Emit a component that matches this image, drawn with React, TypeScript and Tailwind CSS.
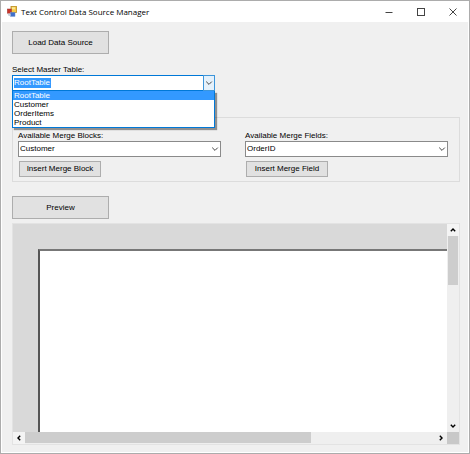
import React, { useState } from 'react'

const TABLES = ['RootTable', 'Customer', 'OrderItems', 'Product']
const BLOCKS = ['Customer', 'OrderItems', 'Product']
const FIELDS = ['OrderID', 'OrderDate', 'ShipName']

const BUTTON = 'border border-[#adadad] bg-[#e1e1e1] text-center hover:border-[#0078d7] hover:bg-[#e5f1fb]'

type ArrowProps = { d: string; className?: string; weight?: number }

const Arrow: React.FC<ArrowProps> = ({ d, className, weight = 1 }) => (
  <svg viewBox="0 0 8 8" className={`h-2 w-2 ${className ?? ''}`} fill="none" stroke="currentColor" strokeWidth={weight}>
    <path d={d} />
  </svg>
)

const DOWN = 'M1.2 2.6L4 5.4L6.8 2.6'

const AppIcon: React.FC = () => (
  <svg viewBox="0 0 10 11" className="h-[11px] w-[10px]">
    <rect x="4" y="0.5" width="5.5" height="6" fill="#f6c945" stroke="#b98a1c" strokeWidth="0.8" />
    <rect x="5" y="1.3" width="3" height="2" fill="#fde89a" />
    <rect x="0.3" y="3" width="4" height="4.2" fill="#c9352b" stroke="#9e3a35" strokeWidth="0.5" />
    <rect x="3.6" y="6.4" width="4.4" height="4" fill="#3f6fc9" stroke="#6c8fd0" strokeWidth="0.5" />
    <path d="M0.6 7.8h2.6v2.2H1.6z" fill="#c9ced8" />
  </svg>
)

const TitleBar: React.FC = () => (
  <header className="flex h-[21px] items-center bg-white pl-[6px]">
    <AppIcon />
    <h1 className="ml-1 flex-1 font-['Open_Sans',sans-serif] text-[8px]">Text Control Data Source Manager</h1>
    <button aria-label="Minimize" className="flex h-full w-8 items-center justify-center">
      <svg viewBox="0 0 8 8" className="h-2 w-2" stroke="#444" fill="none">
        <path d="M0.5 4.5h7" />
      </svg>
    </button>
    <button aria-label="Maximize" className="flex h-full w-8 items-center justify-center">
      <svg viewBox="0 0 8 8" className="h-2 w-2" stroke="#444" fill="none">
        <rect x="0.5" y="0.5" width="7" height="7" />
      </svg>
    </button>
    <button aria-label="Close" className="flex h-full w-8 items-center justify-center">
      <svg viewBox="0 0 8 8" className="h-2 w-2" stroke="#444" fill="none">
        <path d="M0.5 0.5l7 7M7.5 0.5l-7 7" />
      </svg>
    </button>
  </header>
)

const MasterTable: React.FC = () => {
  const [table, setTable] = useState('RootTable')
  const [open, setOpen] = useState(true)

  const choose = (name: string) => {
    setTable(name)
    setOpen(false)
  }

  return (
    <div className="mt-[10px] w-[203px]">
      <label htmlFor="master" className="block h-[11px] leading-[11px]">Select Master Table:</label>
      <div className="relative">
        {/* The list below replaces the native popup */}
        <select
          id="master"
          value={table}
          onChange={(e) => setTable(e.target.value)}
          onMouseDown={(e) => {
            e.preventDefault()
            setOpen(!open)
          }}
          className="block h-4 w-full appearance-none border border-[#0078d7] bg-white bg-[linear-gradient(#3399ff,#3399ff)] bg-[length:37px_10px] bg-[position:1px_2px] bg-no-repeat pl-px text-white outline-none"
        >
          {TABLES.map((name) => (
            <option key={name}>{name}</option>
          ))}
        </select>
        <span className="pointer-events-none absolute top-0 right-0 flex h-4 w-3 items-center justify-center border border-[#3c95da] bg-[#e5f1fb] text-[#444]">
          <Arrow d={DOWN} />
        </span>
        {open && (
          <ul role="listbox" aria-label="Master tables" className="absolute top-4 left-0 z-10 w-full border border-t-0 border-[#0078d7] bg-white shadow-[2px_2px_1px_rgba(0,0,0,0.4)]">
            {TABLES.map((name) => (
              <li
                key={name}
                role="option"
                aria-selected={name === table}
                onClick={() => choose(name)}
                className="h-[9px] pl-px leading-[9px] aria-selected:bg-[#3399ff] aria-selected:text-white"
              >
                {name}
              </li>
            ))}
          </ul>
        )}
      </div>
    </div>
  )
}

type MergeProps = { id: string; label: string; options: string[]; action: string }

const MergePicker: React.FC<MergeProps> = ({ id, label, options, action }) => (
  <div className="w-[203px]">
    <label htmlFor={id} className="block h-[11px] leading-[11px]">{label}</label>
    <div className="relative">
      <select id={id} className="block h-4 w-full appearance-none border border-[#8a8a8a] bg-white pl-px outline-none">
        {options.map((name) => (
          <option key={name}>{name}</option>
        ))}
      </select>
      <Arrow d={DOWN} className="pointer-events-none absolute top-1 right-[2px] text-[#444]" />
    </div>
    <button className={`mt-1 ml-px h-4 w-[82px] ${BUTTON}`}>{action}</button>
  </div>
)

const DocumentView: React.FC = () => (
  <section aria-label="Preview" className="mt-1 grid min-h-40 flex-1 grid-cols-[1fr_12px] grid-rows-[1fr_12px] border border-[#e3e3e3] bg-[#efefef]">
    <div className="flex bg-[#d9d9d9] pt-[25px] pl-[25px]">
      <div className="flex-1 border-t-2 border-l-2 border-t-[#777] border-l-[#555] bg-white" />
    </div>
    <div className="flex flex-col">
      <button aria-label="Scroll up" className="flex h-3 items-center justify-center bg-[#f4f4f4]">
        <Arrow d="M1.8 5.2L4 3L6.2 5.2" weight={1.4} />
      </button>
      <div className="mx-px h-[49px] bg-[#cdcdcd]" />
      <div className="flex-1" />
      <button aria-label="Scroll down" className="flex h-3 items-center justify-center">
        <Arrow d="M1.8 2.8L4 5L6.2 2.8" weight={1.4} />
      </button>
    </div>
    <div className="flex">
      <button aria-label="Scroll left" className="flex w-3 items-center justify-center bg-[#f4f4f4]">
        <Arrow d="M5.2 1.8L3 4L5.2 6.2" weight={1.4} />
      </button>
      <div className="mb-px w-[66%] bg-[#cdcdcd]" />
      <div className="flex-1" />
      <button aria-label="Scroll right" className="flex w-3 items-center justify-center">
        <Arrow d="M2.8 1.8L5 4L2.8 6.2" weight={1.4} />
      </button>
    </div>
    <div className="bg-[#c8c8c8]" />
  </section>
)

export default function App() {
  return (
    <div className="flex min-h-screen flex-col border border-[#acacac] bg-white font-['Liberation_Sans',Arial,sans-serif] text-[8px] text-black">
      <TitleBar />
      <main className="mx-px mb-px flex flex-1 flex-col bg-[#f0f0f0] pt-[9px] pr-2 pb-[7px] pl-[10px]">
        <button className={`h-[23px] w-[97px] shrink-0 ${BUTTON}`}>Load Data Source</button>
        <MasterTable />
        <fieldset className="mt-[26px] flex gap-6 border border-[#dcdcdc] px-[5px] pt-3 pb-1">
          <MergePicker id="blocks" label="Available Merge Blocks:" options={BLOCKS} action="Insert Merge Block" />
          <MergePicker id="fields" label="Available Merge Fields:" options={FIELDS} action="Insert Merge Field" />
        </fieldset>
        <button className={`mt-[14px] h-[23px] w-[97px] shrink-0 ${BUTTON}`}>Preview</button>
        <DocumentView />
      </main>
    </div>
  )
}
